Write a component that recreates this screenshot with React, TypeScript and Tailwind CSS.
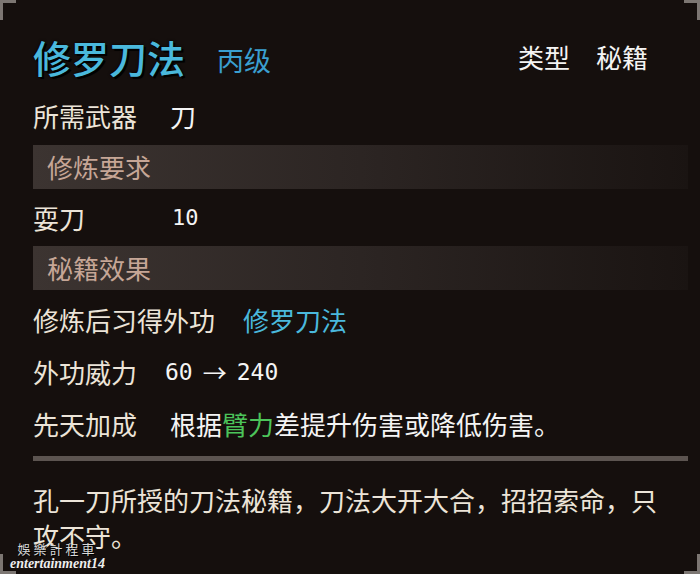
export default function App() {
  const font = { fontFamily: '"Noto Sans CJK SC", "Noto Sans", sans-serif' };
  const mono = { fontFamily: '"DejaVu Sans Mono", "Liberation Mono", monospace' };

  return (
    <div
      className="relative w-[700px] h-[574px] overflow-hidden bg-[#150f0d] text-[#ece4d8]"
      style={font}
    >
      {/* corner brackets */}
      <div className="absolute top-0 left-0 w-[16px] h-[20px] border-l-[3px] border-t-[3px] border-[#7c7672]" />
      <div className="absolute top-0 right-0 w-[16px] h-[20px] border-r-[3px] border-t-[3px] border-[#7c7672]" />
      <div className="absolute bottom-0 left-0 w-[16px] h-[20px] border-l-[3px] border-b-[3px] border-[#7c7672]" />
      <div className="absolute bottom-0 right-0 w-[16px] h-[20px] border-r-[3px] border-b-[3px] border-[#7c7672]" />

      <div className="flex flex-col pt-[27px] pl-[33px] pr-[12px]">
        {/* title */}
        <div className="flex items-center h-[60px] pr-[40px]">
          <span className="text-[38px] font-medium leading-none text-[#4ab8dc] [text-shadow:0_0_3px_#000,2px_2px_0_#000]">
            修罗刀法
          </span>
          <span className="ml-[32px] mt-[4px] text-[27px] leading-none text-[#3a9fd0]">丙级</span>
          <div className="ml-auto flex gap-[26px] text-[26px] leading-none text-[#f4f4f4]">
            <span>类型</span>
            <span>秘籍</span>
          </div>
        </div>

        <div className="flex items-center h-[58px] text-[26px] leading-none">
          <span className="w-[137px]">所需武器</span>
          <span className="text-[#f4f4f4]">刀</span>
        </div>

        <div className="flex items-center h-[44px] pl-[14px] bg-gradient-to-r from-[#3c3431] via-[#2c2523] to-[#1a1412] text-[26px] leading-none text-[#c6a696]">
          修炼要求
        </div>

        <div className="flex items-center h-[57px] text-[26px] leading-none">
          <span className="w-[139px]">耍刀</span>
          <span className="text-[#f4f4f4] text-[22px]" style={mono}>10</span>
        </div>

        <div className="flex items-center h-[44px] pl-[14px] bg-gradient-to-r from-[#3c3431] via-[#2c2523] to-[#1a1412] text-[26px] leading-none text-[#c6a696]">
          秘籍效果
        </div>

        <div className="flex flex-col pt-[4px] text-[26px] leading-none">
          <div className="flex items-center h-[52px]">
            <span>修炼后习得外功</span>
            <span className="ml-[28px] text-[#4ab8dc]">修罗刀法</span>
          </div>
          <div className="flex items-center h-[52px]">
            <span>外功威力</span>
            <span className="ml-[28px] flex items-center gap-[10px] text-[#f4f4f4]">
              <span className="text-[23px]" style={mono}>60</span>
              <span className="text-[24px]">→</span>
              <span className="text-[23px]" style={mono}>240</span>
            </span>
          </div>
          <div className="flex items-center h-[52px]">
            <span className="w-[137px]">先天加成</span>
            <span className="text-[#f4f4f4]">
              根据<span className="text-[#4cc45a]">臂力</span>差提升伤害或降低伤害。
            </span>
          </div>
        </div>

        <div className="mt-[6px] h-[5px] bg-[#5c5450]" />

        <p className="pt-[21px] w-[630px] text-[26px] leading-[36px] text-[#ece4d8]">
          孔一刀所授的刀法秘籍，刀法大开大合，招招索命，只攻不守。
        </p>
      </div>

      {/* watermark */}
      <div className="absolute left-[10px] bottom-[3px] flex flex-col items-center leading-none">
        <span className="text-[13px] tracking-[3px] text-[#d8d8d8] [text-shadow:1px_1px_0_#000]" style={{ fontFamily: '"Noto Sans CJK TC", serif' }}>
          娛樂計程車
        </span>
        <span className="mt-[2px] text-[14px] italic font-bold text-[#eeeeee]" style={{ fontFamily: '"Liberation Serif", serif' }}>
          entertainment14
        </span>
      </div>
    </div>
  );
}
